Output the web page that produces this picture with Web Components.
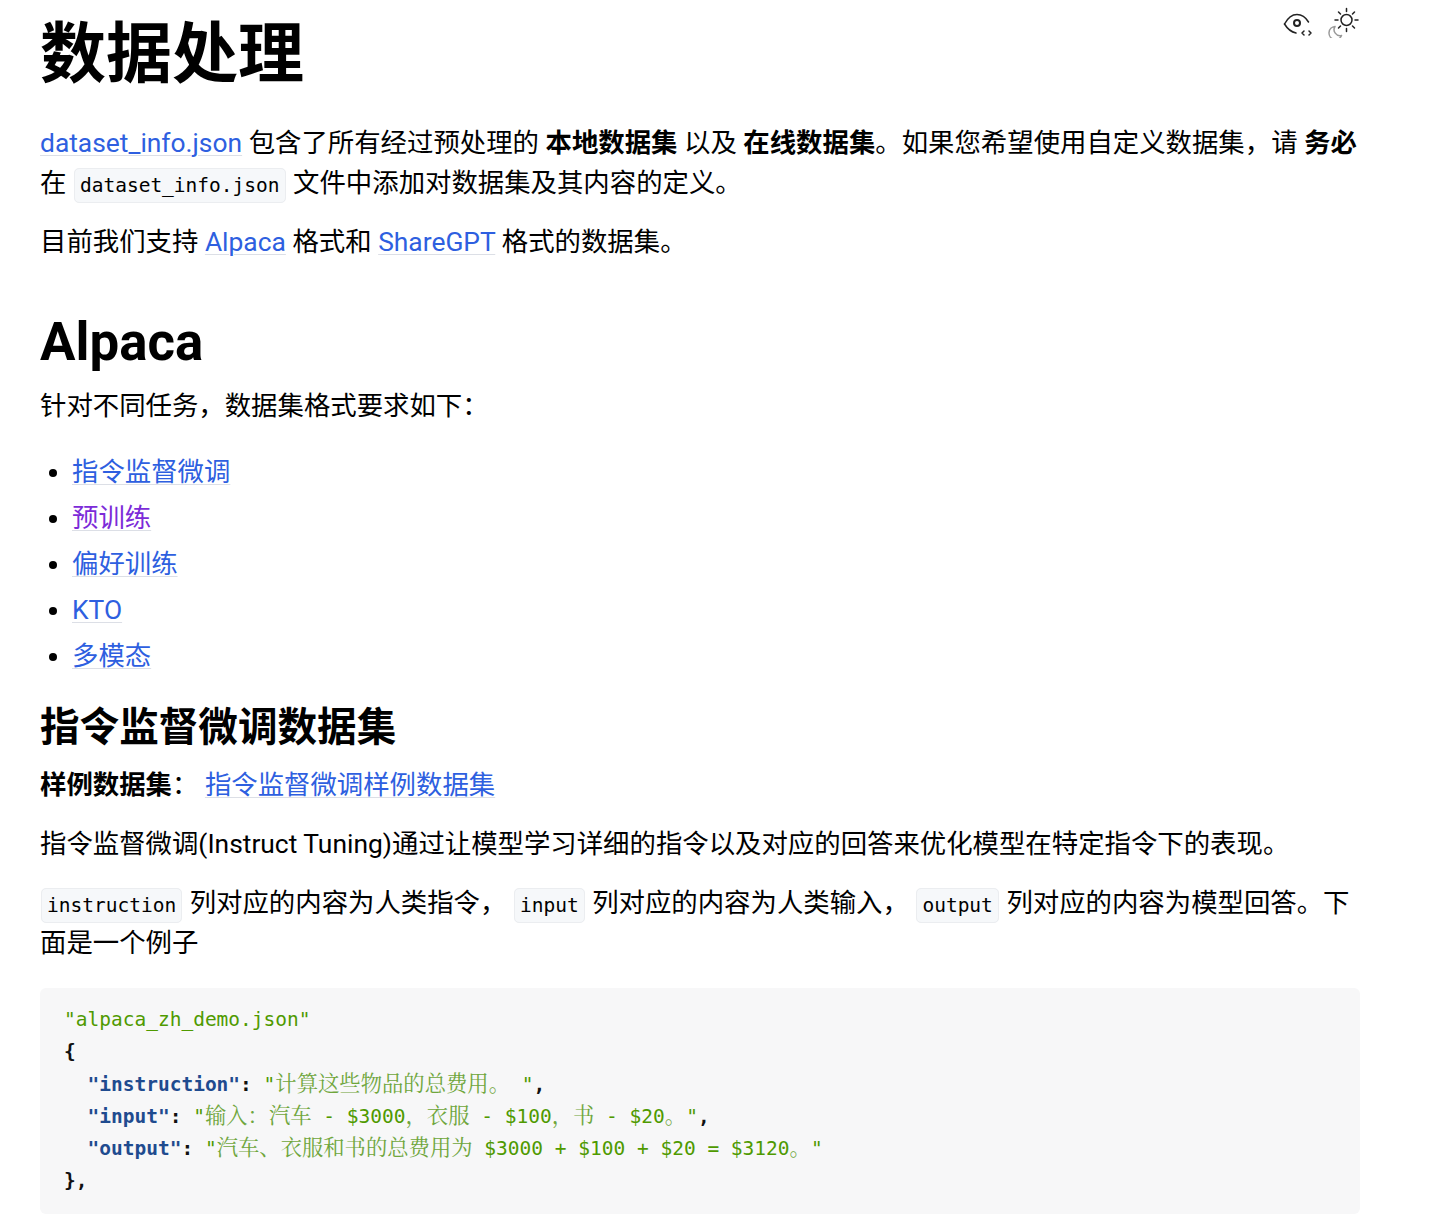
<!DOCTYPE html>
<html lang="zh">
<head>
<meta charset="utf-8">
<title>数据处理</title>
<style>
  html, body { margin: 0; padding: 0; background: #fff; }
  body { font-family: Roboto, "Noto Sans CJK SC", sans-serif; color: #000; overflow: hidden; }
</style>
</head>
<body>
<doc-page>
  <doc-title slot="title">数据处理</doc-title>
  <doc-actions slot="actions"></doc-actions>

  <doc-para first><doc-link>dataset_info.json</doc-link> 包含了所有经过预处理的 <b>本地数据集</b> 以及 <b>在线数据集</b>。如果您希望使用自定义数据集，请 <b>务必</b> 在 <inline-code>dataset_info.json</inline-code> 文件中添加对数据集及其内容的定义。</doc-para>
  <doc-para>目前我们支持 <doc-link>Alpaca</doc-link> 格式和 <doc-link>ShareGPT</doc-link> 格式的数据集。</doc-para>

  <doc-heading level="2">Alpaca</doc-heading>
  <doc-para tight>针对不同任务，数据集格式要求如下：</doc-para>
  <doc-list>
    <doc-item><doc-link>指令监督微调</doc-link></doc-item>
    <doc-item><doc-link visited>预训练</doc-link></doc-item>
    <doc-item><doc-link>偏好训练</doc-link></doc-item>
    <doc-item><doc-link>KTO</doc-link></doc-item>
    <doc-item><doc-link>多模态</doc-link></doc-item>
  </doc-list>

  <doc-heading level="3">指令监督微调数据集</doc-heading>
  <doc-para tight><b>样例数据集</b>： <doc-link>指令监督微调样例数据集</doc-link></doc-para>
  <doc-para>指令监督微调(Instruct Tuning)通过让模型学习详细的指令以及对应的回答来优化模型在特定指令下的表现。</doc-para>
  <doc-para><inline-code>instruction</inline-code> 列对应的内容为人类指令， <inline-code>input</inline-code> 列对应的内容为人类输入， <inline-code>output</inline-code> 列对应的内容为模型回答。下面是一个例子</doc-para>

  <code-block></code-block>
</doc-page>

<script>
class DocPage extends HTMLElement {
  constructor() {
    super();
    this.attachShadow({ mode: "open" }).innerHTML = `
      <style>
        :host { display: block; width: 1320px; padding: 0 78px 0 40px; }
        header { display: flex; justify-content: space-between; align-items: flex-start; }
      </style>
      <header><slot name="title"></slot><slot name="actions"></slot></header>
      <slot></slot>`;
  }
}

class DocTitle extends HTMLElement {
  constructor() {
    super();
    this.attachShadow({ mode: "open" }).innerHTML = `
      <style>
        :host { display: block; font-size: 66px; font-weight: 700; line-height: 80px; padding-top: 15px; }
      </style>
      <slot></slot>`;
  }
}

class DocActions extends HTMLElement {
  constructor() {
    super();
    this.attachShadow({ mode: "open" }).innerHTML = `
      <style>
        :host { display: flex; gap: 14px; padding-top: 6px; }
        svg { display: block; fill: none; stroke: #222; stroke-width: 1.5; stroke-linecap: round; stroke-linejoin: round; }
      </style>
      <svg width="32" height="32" viewBox="0 0 32 32">
        <path d="M2.500 18C6 11.500 10.500 8.500 15 8.500c4.500 0 8.500 2.500 11.500 7.500"/>
        <path d="M2.500 18c3 5 7 8 11.500 9"/>
        <circle cx="15" cy="17" r="3" stroke-width="2"/>
        <path d="M22 25l-2 2 2 2M27 25l2 2-2 2"/>
      </svg>
      <svg width="32" height="32" viewBox="0 0 32 32">
        <circle cx="18.500" cy="14" r="5.500"/>
        <path d="M18.500 2.500v3M18.500 22.500v3M7 14h3M27 14h3M10.500 6l2 2M24.500 20l2 2M26.500 6l-2 2M12.500 20l-2 2"/>
        <path d="M7 20.500a6.500 6.500 0 1 0 6.500 9 6 6 0 0 1-6.500-9z" stroke="#999"/>
      </svg>`;
  }
}

class DocPara extends HTMLElement {
  constructor() {
    super();
    this.attachShadow({ mode: "open" }).innerHTML = `
      <style>
        :host { display: block; font-size: 26.400px; line-height: 40px; margin: 19px 0 0; }
        :host([first]) { margin-top: 28px; }
        :host([tight]) { margin-top: 12px; }
      </style>
      <slot></slot>`;
  }
}

class DocHeading extends HTMLElement {
  constructor() {
    super();
    this.attachShadow({ mode: "open" }).innerHTML = `
      <style>
        :host { display: block; font-weight: 700; }
        :host([level="2"]) { font-size: 52.800px; line-height: 64px; margin-top: 48px; }
        :host([level="3"]) { font-size: 39.600px; line-height: 50px; margin-top: 27px; }
      </style>
      <slot></slot>`;
  }
}

class DocLink extends HTMLElement {
  constructor() {
    super();
    this.attachShadow({ mode: "open" }).innerHTML = `
      <style>
        :host { display: inline; color: #2e5fe0; text-decoration: underline 1px #dcdfe6; text-underline-offset: 3px; }
        :host([visited]) { color: #7c2bd8; }
      </style>
      <slot></slot>`;
  }
}

class InlineCode extends HTMLElement {
  constructor() {
    super();
    this.attachShadow({ mode: "open" }).innerHTML = `
      <style>
        :host {
          display: inline; font-family: "DejaVu Sans Mono", monospace; font-size: 19.500px; line-height: 1;
          padding: 5px; margin: 0 1px; background: #f6f8fa; border: 1px solid #ebedf0; border-radius: 5px;
        }
      </style>
      <slot></slot>`;
  }
}

class DocList extends HTMLElement {
  constructor() {
    super();
    this.attachShadow({ mode: "open" }).innerHTML = `
      <style>
        :host { display: flex; flex-direction: column; gap: 6px; margin-top: 26px; padding-left: 32px; }
      </style>
      <slot></slot>`;
  }
}

class DocItem extends HTMLElement {
  constructor() {
    super();
    this.attachShadow({ mode: "open" }).innerHTML = `
      <style>
        :host { display: list-item; list-style: disc; font-size: 26.400px; line-height: 40px; }
      </style>
      <slot></slot>`;
  }
}

// the sample json, one line per row, tokens as [class, text]
const SAMPLE = [
  [["str", '"alpaca_zh_demo.json"']],
  [["pun", "{"]],
  [["", "  "], ["key", '"instruction"'], ["pun", ": "], ["str", '"'], ["cjk", "计算这些物品的总费用。"], ["str", ' "'], ["pun", ","]],
  [["", "  "], ["key", '"input"'], ["pun", ": "], ["str", '"'], ["cjk", "输入："], ["cjk", "汽车"], ["str", " - $3000"], ["cjk", "，衣服"], ["str", " - $100"], ["cjk", "，书"], ["str", " - $20"], ["cjk", "。"], ["str", '"'], ["pun", ","]],
  [["", "  "], ["key", '"output"'], ["pun", ": "], ["str", '"'], ["cjk", "汽车、衣服和书的总费用为"], ["str", " $3000 + $100 + $20 = $3120"], ["cjk", "。"], ["str", '"']],
  [["pun", "},"]],
];

class CodeBlock extends HTMLElement {
  constructor() {
    super();
    const lines = SAMPLE.map(l => "<div>" + l.map(([c, t]) => `<span class="${c}">${t}</span>`).join("") + "</div>").join("");
    this.attachShadow({ mode: "open" }).innerHTML = `
      <style>
        :host { display: block; margin-top: 25px; background: #f7f7f8; border-radius: 6px; padding: 16px 24px 16px; }
        pre { margin: 0; font-family: "DejaVu Sans Mono", "Noto Serif CJK SC", "Noto Sans CJK SC", monospace; font-size: 19.500px; line-height: 32.300px; }
        div { height: 32.300px; }
        .str { color: #4f9a00; }
        .cjk { color: #6fa63c; font-size: 21.330px; line-height: 1; }
        .key { color: #1f4b8f; font-weight: 700; }
        .pun { color: #111; font-weight: 700; }
      </style>
      <pre>${lines}</pre>`;
  }
}

customElements.define("doc-page", DocPage);
customElements.define("doc-title", DocTitle);
customElements.define("doc-actions", DocActions);
customElements.define("doc-para", DocPara);
customElements.define("doc-heading", DocHeading);
customElements.define("doc-link", DocLink);
customElements.define("inline-code", InlineCode);
customElements.define("doc-list", DocList);
customElements.define("doc-item", DocItem);
customElements.define("code-block", CodeBlock);
</script>
</body>
</html>
